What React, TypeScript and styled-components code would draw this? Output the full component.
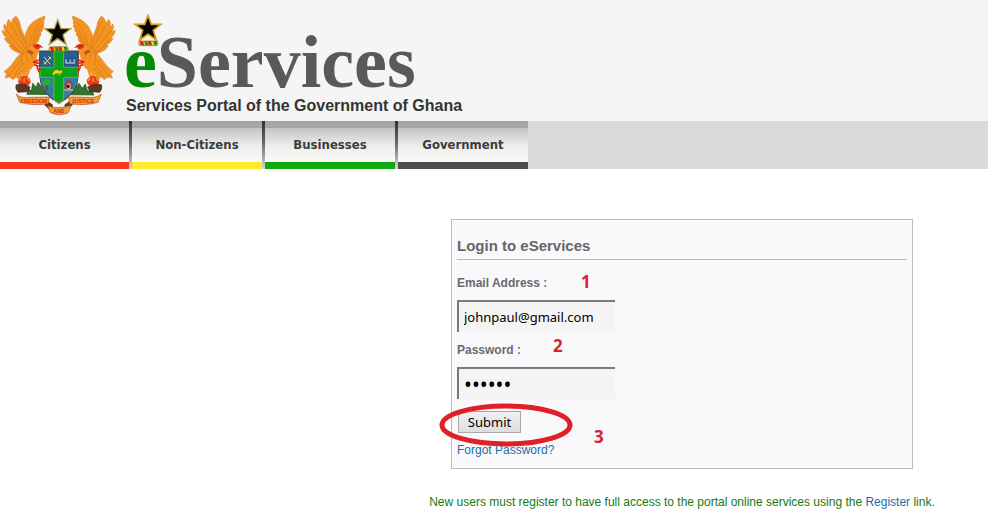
import React from "react";
import styled, { createGlobalStyle } from "styled-components";

const GlobalStyle = createGlobalStyle`
  * { box-sizing: border-box; }
  body {
    margin: 0;
    background: #ffffff;
    font-family: "Liberation Sans", Arial, sans-serif;
    font-size: 12px;
  }
`;

const Header = styled.header`
  display: flex;
  align-items: flex-end;
  gap: 4px;
  height: 121px;
  padding-bottom: 7px;
  background: #f5f5f5;
`;

const Emblem = styled.svg`
  display: block;
  flex: none;
  width: 120px;
  height: 110px;
  margin-bottom: -6px;
`;

const Brand = styled.div`
  position: relative;
`;

const Wordmark = styled.h1`
  margin: 0;
  font: bold 74px/72px "Liberation Serif", "Times New Roman", serif;
  color: #595959;
`;

const Initial = styled.span`
  color: #058a05;
`;

const BrandStar = styled.svg`
  position: absolute;
  left: 9px;
  top: -12px;
  width: 30px;
  height: 33px;
`;

const Tagline = styled.p`
  margin: 0 2px;
  font-size: 16px;
  line-height: 16px;
  font-weight: bold;
  color: #333333;
`;

const Nav = styled.nav`
  display: flex;
  background: #dadada;
`;

const TabList = styled.ul`
  display: grid;
  grid-template-columns: 129px repeat(3, 130px);
  gap: 3px;
  margin: 0;
  padding: 0;
  list-style: none;
  background: linear-gradient(#303030, #666666 45%, #d8d8d8);
`;

const Tab = styled.a<{ $accent: string }>`
  display: block;
  height: 48px;
  border-top: 7px solid #a5a5a5;
  border-bottom: 7px solid ${(p) => p.$accent};
  background: linear-gradient(#c4c4c4, #eeeeed 55%, #fafaf9);
  color: #3b3b3b;
  font: bold 13px/34px "DejaVu Sans Condensed", "Noto Sans", sans-serif;
  text-align: center;
  text-decoration: none;
`;

const Main = styled.main`
  display: flex;
  flex-direction: column;
  align-items: center;
  padding: 50px 0 18px 376px;
`;

const LoginForm = styled.form`
  position: relative;
  width: 462px;
  max-width: 100%;
  padding: 16px 5px 10px;
  border: 1px solid #bcbcbe;
  background: #f9f9fc;
`;

const Title = styled.h2`
  margin: 0 0 15px;
  padding-bottom: 3px;
  border-bottom: 1px solid #b9b9bb;
  font-size: 15px;
  line-height: 20px;
  color: #666666;
`;

const Field = styled.div`
  margin-bottom: 10px;
`;

const Label = styled.label`
  display: block;
  margin-bottom: 9px;
  font-weight: bold;
  line-height: 16px;
  color: #6a6a6a;
`;

const TextInput = styled.input`
  display: block;
  width: 158px;
  height: 32px;
  padding: 0 5px;
  border: 0 solid #7b7b7b;
  border-width: 2px 0 0 2px;
  border-radius: 0;
  outline: none;
  background: #f4f4f4;
  color: #000000;
  font: 13px "Noto Sans", "Open Sans", sans-serif;

  &[type="password"] {
    font-size: 21px;
  }
`;

const Action = styled.div`
  position: relative;
  display: flex;
  margin: 12px 0 9px;
  padding-left: 1px;
`;

const SubmitButton = styled.button`
  width: 63px;
  height: 22px;
  padding: 0;
  border: 1px solid #a9a9a9;
  background: linear-gradient(#f1f1f1, #dedede);
  color: #000000;
  font: 13px/20px "Noto Sans", "Open Sans", sans-serif;
`;

const Ring = styled.svg`
  position: absolute;
  left: -18px;
  top: -8px;
  width: 134px;
  height: 44px;
  pointer-events: none;
`;

const Step = styled.span<{ $x: number; $y: number }>`
  position: absolute;
  left: ${(p) => p.$x}px;
  top: ${(p) => p.$y}px;
  font: bold 17px/20px "Open Sans", "Noto Sans", sans-serif;
  color: #d92231;
`;

const TextLink = styled.a`
  color: #1b6ca8;
  line-height: 16px;
  text-decoration: none;
`;

const Note = styled.p`
  margin: 25px 0 0;
  line-height: 16px;
  color: #137a13;
`;

const STAR = "0,-40 10,-13 39,-13 16,5 25,34 0,17 -25,34 -16,5 -39,-13 -10,-13";

function Torse() {
  return (
    <g stroke="#5c4a12" strokeWidth="1.5">
      <rect x="-29" y="-7" width="58" height="14" rx="6" fill="#f6d51f" />
      <path d="M-26-6h10l4 12h-11zM-2-7h10l3 13H1z" fill="#d8281c" stroke="none" />
      <path d="M-12-6h8l4 12h-9zM15-7h9l3 9-8 5z" fill="#198a2c" stroke="none" />
    </g>
  );
}

function Eagle() {
  return (
    <g>
      <g fill="#f59320" stroke="#d07a1a" strokeWidth="1.5" strokeLinejoin="round">
        <path d="M79 124 Q66 88 80 63 Q88 34 134 18 Q136 26 130 34 Q136 35 130 44 Q135 48 127 56 Q131 62 122 68 Q126 76 117 81 Q121 91 108 101Z" />
        <path d="M73 133 Q36 126 27 107 L34 106 Q17 98 13 84 L22 86 Q8 75 6 61 L18 67 Q8 54 13 42 L22 52 Q18 37 26 28 L34 40 Q36 25 48 18 Q60 31 62 51 Q72 76 88 118Z" />
        <path d="M68 123 Q87 99 110 103 Q124 108 116 124 Q109 137 108 153 Q96 181 77 186 L65 194 L61 209 L48 201 L39 209 L29 201 L15 204 L20 191 L12 185 Q35 169 46 148Z" />
      </g>
      <g fill="none" stroke="#c46c16" strokeWidth="1.6">
        <path d="M90 108Q88 76 123 35M97 106Q102 75 127 46M103 104Q109 83 121 67" />
        <path d="M76 128Q40 91 21 63M80 121Q55 84 34 46M84 116Q62 74 46 32M67 130Q45 119 33 105M61 126Q40 110 23 87" />
        <path d="M70 127Q60 149 70 166M81 124Q76 146 88 157M91 122Q91 137 101 146M62 150Q43 178 25 197M69 161Q49 181 40 204M74 173Q57 187 51 197" />
      </g>
      <path d="M100 105Q112 99 121 105L130 114Q120 110 116 116Q106 119 100 111Z" fill="#df321d" />
      <circle cx="112" cy="108" r="1.8" fill="#111" />
      <path d="M85 120L101 128M82 124L97 133" stroke="#d72b1c" strokeWidth="3" />
      <path d="M83 123L99 131" stroke="#15883a" strokeWidth="2" />
      <path d="M91 153Q105 149 112 158L102 165M76 180L70 203M86 180L79 202" fill="none" stroke="#f59320" strokeWidth="8" />
      <path d="M100 156L119 149M102 158L120 160M104 165L118 169M111 171L117 186M112 176L123 178" stroke="#e21c1c" strokeWidth="4" strokeLinecap="round" />
      <ellipse cx="73" cy="214" rx="18" ry="15" fill="#ee3a18" stroke="#9f1b16" />
      <path d="M63 203L57 213M73 203L72 216M81 203L88 213" stroke="#ff991d" strokeWidth="4" />
    </g>
  );
}

function CoatOfArms() {
  return (
    <Emblem viewBox="0 0 360 330" role="img" aria-label="Coat of arms of Ghana">
      <path d="M80 253L88 237 94 244 98 220 109 232 114 217 126 232 146 246 157 268 196 268 213 247 237 220 247 235 256 222 263 244 274 239 282 255Z" fill="#34732d" stroke="#1d4c1c" strokeWidth="2" />
      <path d="M119 123H235V195Q234 250 177 280Q120 250 119 195Z" fill="#24608f" stroke="#563627" strokeWidth="3" />
      <path d="M120 202H163V269Q123 245 120 202ZM190 202H234Q230 247 190 269Z" fill="#387b9c" />
      <path d="M162 124H191V172H234V202H191V270L177 278 162 270V202H120V172H162Z" fill="#06a51c" stroke="#b8b52c" strokeWidth="2" />
      <path d="M132 141L151 163M153 140L132 163M130 154L140 163M145 139L154 148" stroke="#eee458" strokeWidth="3" />
      <path d="M194 146h8v9h5v-9h7v9h5v-9h8v17h-33zM195 167q6-4 11 0t11 0t11 0" fill="#8cafd1" stroke="#183b69" strokeWidth="2" />
      <path d="M158 190L165 180Q171 177 178 183L184 180 188 186 184 191 182 188 178 199 175 190 166 191 161 197" fill="#efe01d" stroke="#9a871a" strokeWidth="2" />
      <path d="M140 219V241" stroke="#643c19" strokeWidth="5" />
      <path d="M129 222Q126 215 133 212Q136 203 143 208Q153 208 151 216Q157 224 146 225Q137 230 129 222Z" fill="#20b32d" />
      <path d="M197 220L208 211 216 220V235H197Z" fill="#d93b33" stroke="#40292a" />
      <path d="M202 223h8v12h-8M193 240h26" stroke="#f2d6aa" strokeWidth="3" />
      <Eagle />
      <g transform="translate(352 0) scale(-1 1)"><Eagle /></g>
      <g fill="#5b3826" stroke="#452812" strokeWidth="2">
        <path d="M48 225Q70 217 90 231L84 245 54 247Q45 237 48 225ZM305 225Q283 217 263 231L270 245 299 247Q308 237 305 225Z" />
        <path d="M137 270L158 285 154 302 134 285ZM214 270L194 285 201 302 217 284Z" />
      </g>
      <path d="M49 252Q61 266 90 262L149 261 144 281Q96 288 59 277ZM304 252Q289 265 262 262L205 261 209 281Q258 288 294 277ZM143 287Q176 300 212 286L205 308Q178 320 151 308Z" fill="#f59a31" stroke="#a75318" strokeWidth="2" />
      <g fill="#e31f17" fontFamily="Liberation Sans, sans-serif" fontSize="15" fontWeight="bold" textAnchor="middle">
        <text x="102" y="278" fontSize="16">FREEDOM</text>
        <text x="249" y="278" fontSize="16">JUSTICE</text>
        <text x="177" y="308">AND</text>
      </g>
      <g transform="translate(173 69)">
        <polygon points={STAR} fill="#050505" stroke="#b49c43" strokeWidth="4" />
      </g>
      <g transform="translate(176 117)"><Torse /></g>
    </Emblem>
  );
}

const tabs = [
  { name: "Citizens", accent: "#fc3519" },
  { name: "Non-Citizens", accent: "#fdec2f" },
  { name: "Businesses", accent: "#10a910" },
  { name: "Government", accent: "#4b4e4a" },
];

export default function App() {
  return (
    <>
      <GlobalStyle />
      <Header>
        <CoatOfArms />
        <Brand>
          <Wordmark><Initial>e</Initial>Services</Wordmark>
          <BrandStar viewBox="-45 -44 90 99" aria-hidden="true">
            <path d="M-20 24L-25 40H27L20 24" fill="#fff2c3" stroke="#d8a62b" strokeWidth="3" />
            <polygon points={STAR} fill="#080300" stroke="#d5a12a" strokeWidth="5" />
            <g transform="translate(1 44)"><Torse /></g>
          </BrandStar>
          <Tagline>Services Portal of the Government of Ghana</Tagline>
        </Brand>
      </Header>
      <Nav>
        <TabList>
          {tabs.map((t) => (
            <li key={t.name}><Tab href="#" $accent={t.accent}>{t.name}</Tab></li>
          ))}
        </TabList>
      </Nav>
      <Main>
        <LoginForm onSubmit={(e) => e.preventDefault()}>
          <Title>Login to eServices</Title>
          <Field>
            <Label htmlFor="email">Email Address :</Label>
            <TextInput id="email" type="text" defaultValue="johnpaul@gmail.com" />
          </Field>
          <Field>
            <Label htmlFor="password">Password :</Label>
            <TextInput id="password" type="password" defaultValue="secret" />
          </Field>
          <Action>
            <SubmitButton type="submit">Submit</SubmitButton>
            <Ring viewBox="0 0 134 44" aria-hidden="true">
              <ellipse cx="67" cy="22" rx="64" ry="19" fill="none" stroke="#e01f27" strokeWidth="5" />
            </Ring>
          </Action>
          <TextLink href="#">Forgot Password?</TextLink>
          <Step $x={129} $y={52}>1</Step>
          <Step $x={101} $y={116}>2</Step>
          <Step $x={142} $y={207}>3</Step>
        </LoginForm>
        <Note>
          New users must register to have full access to the portal online services using the{" "}
          <TextLink href="#">Register</TextLink> link.
        </Note>
      </Main>
    </>
  );
}
